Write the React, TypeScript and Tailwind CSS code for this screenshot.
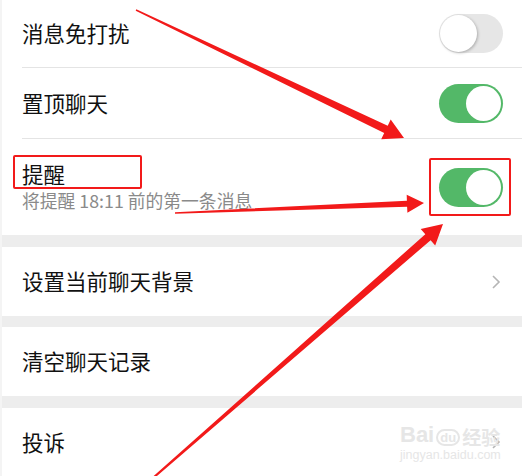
import React from "react";

type P = [number, number];

function arrowPoints(S: P, T: P, w0: number, w1: number, L: number, H: number): string {
  const dx = T[0] - S[0];
  const dy = T[1] - S[1];
  const len = Math.hypot(dx, dy);
  const d: P = [dx / len, dy / len];
  const n: P = [-d[1], d[0]];
  const B: P = [T[0] - d[0] * L, T[1] - d[1] * L];
  const pts: P[] = [
    [S[0] + (n[0] * w0) / 2, S[1] + (n[1] * w0) / 2],
    [B[0] + (n[0] * w1) / 2, B[1] + (n[1] * w1) / 2],
    [B[0] + n[0] * H, B[1] + n[1] * H],
    T,
    [B[0] - n[0] * H, B[1] - n[1] * H],
    [B[0] - (n[0] * w1) / 2, B[1] - (n[1] * w1) / 2],
    [S[0] - (n[0] * w0) / 2, S[1] - (n[1] * w0) / 2],
  ];
  return pts.map((p) => `${p[0].toFixed(1)},${p[1].toFixed(1)}`).join(" ");
}

function Toggle({ on }: { on: boolean }) {
  if (on) {
    return (
      <div className="relative h-[39px] w-[64px] rounded-full bg-[#53b868]">
        <div className="absolute right-[2px] top-[2px] h-[35px] w-[35px] rounded-full bg-white" />
      </div>
    );
  }
  return (
    <div className="relative h-[39px] w-[64px] rounded-full bg-[#e6e6e6]">
      <div className="absolute left-[1px] top-[1px] h-[37px] w-[37px] rounded-full bg-white shadow-[1px_1px_3px_rgba(0,0,0,0.25)]" />
    </div>
  );
}

function Chevron() {
  return (
    <svg width="12" height="16" viewBox="0 0 12 16" className="mr-[20px]">
      <path d="M3 2 L9 8 L3 14" fill="none" stroke="#b5b5b5" strokeWidth="1.6" />
    </svg>
  );
}

const font = { fontFamily: '"Noto Sans CJK SC", "Noto Sans", sans-serif' };
const latin = { fontFamily: '"Liberation Sans", sans-serif' };

export default function App() {
  return (
    <div className="relative h-[476px] w-[522px] overflow-hidden bg-[#ededed]" style={font}>
      <div className="flex flex-col border-l-2 border-[#f4f4f4]">
        <div className="flex h-[67px] items-center justify-between bg-white pl-[20px] pr-[19px]">
          <span className="text-[21.5px] text-[#111]">消息免打扰</span>
          <Toggle on={false} />
        </div>
        <div className="bg-white pl-[20px]">
          <div className="h-px bg-[#e4e4e4]" />
        </div>
        <div className="flex h-[70px] items-center justify-between bg-white pl-[20px] pr-[19px]">
          <span className="text-[21.5px] text-[#111]">置顶聊天</span>
          <Toggle on={true} />
        </div>
        <div className="bg-white pl-[20px]">
          <div className="h-px bg-[#e4e4e4]" />
        </div>
        <div className="flex h-[96px] items-center justify-between bg-white pl-[20px] pr-[19px]">
          <div className="flex flex-col">
            <span className="text-[21.5px] leading-[27px] text-[#111]">提醒</span>
            <span className="text-[17.8px] leading-[27px] text-[#8a8a8a]">将提醒 18:11 前的第一条消息</span>
          </div>
          <Toggle on={true} />
        </div>
        <div className="h-[12px]" />
        <div className="flex h-[69px] items-center justify-between bg-white pl-[20px]">
          <span className="text-[21.5px] text-[#111]">设置当前聊天背景</span>
          <Chevron />
        </div>
        <div className="h-[11px]" />
        <div className="flex h-[69px] items-center bg-white pl-[20px]">
          <span className="text-[21.5px] text-[#111]">清空聊天记录</span>
        </div>
        <div className="h-[12px]" />
        <div className="flex h-[68px] items-center justify-between bg-white pl-[20px]">
          <span className="text-[21.5px] text-[#111]">投诉</span>
          <Chevron />
        </div>
      </div>

      {/* Baidu watermark */}
      <div className="pointer-events-none absolute left-[400px] top-[424px] flex flex-col items-start text-[#e6e6e6]">
        <div className="flex items-end leading-none">
          <span className="text-[22px] font-bold" style={latin}>Bai</span>
          <span className="mx-[2px] rounded-full border-2 border-[#e6e6e6] px-[2px] text-[13px] font-bold" style={latin}>du</span>
          <span className="text-[19px] font-bold">经验</span>
        </div>
        <span className="mt-[3px] text-[12.5px] leading-none" style={latin}>jingyan.baidu.com</span>
      </div>

      {/* red boxes */}
      <div className="pointer-events-none absolute left-[13px] top-[155px] h-[34px] w-[129px] rounded-[2px] border-2 border-[#f21a1a]" />
      <div className="pointer-events-none absolute left-[429px] top-[158px] h-[58px] w-[82px] rounded-[2px] border-2 border-[#f21a1a]" />

      {/* arrows */}
      <svg className="pointer-events-none absolute left-0 top-0" width="522" height="476" viewBox="0 0 522 476">
        <polygon points={arrowPoints([136, 10], [404, 138], 1.5, 8, 20, 11)} fill="#f21a1a" />
        <polygon points={arrowPoints([175, 213], [424, 203], 1.5, 6, 17, 9)} fill="#f21a1a" />
        <polygon points={arrowPoints([153, 478], [443, 224], 2, 8, 20, 11)} fill="#f21a1a" />
      </svg>
    </div>
  );
}
